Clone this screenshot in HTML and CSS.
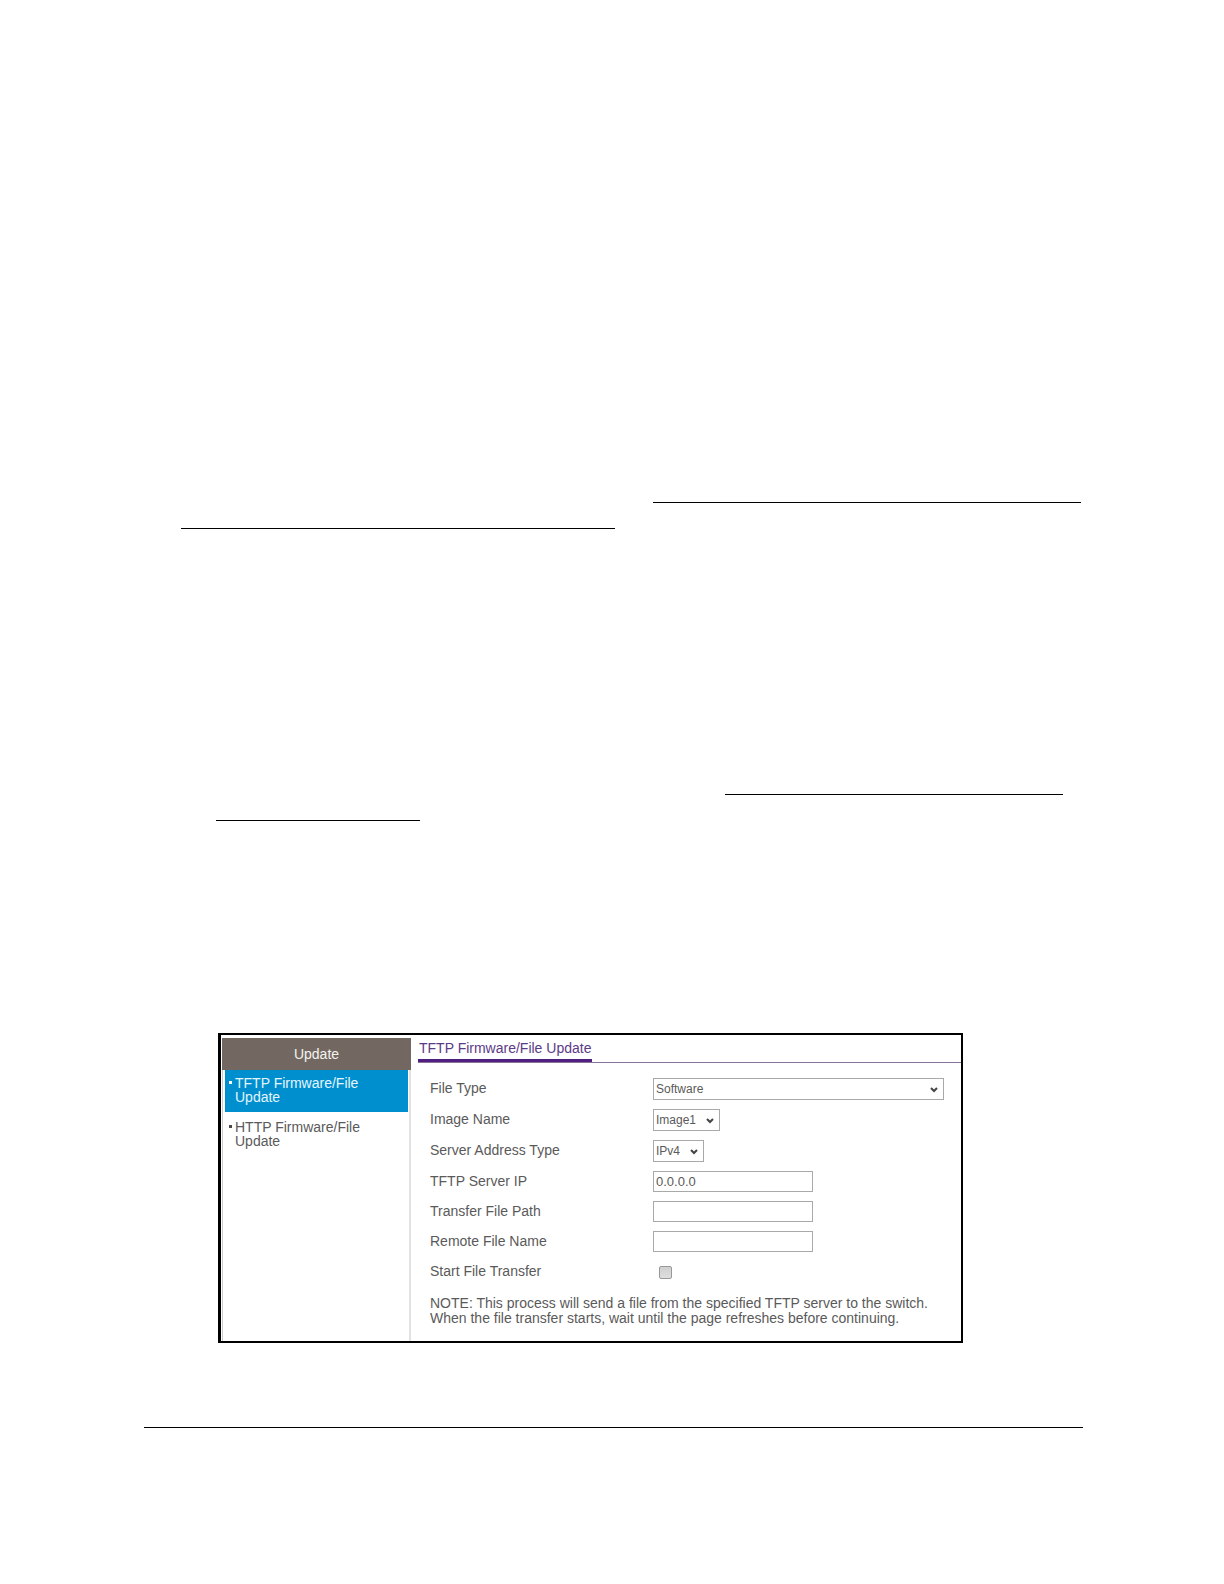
FILE: index.html
```html
<!DOCTYPE html>
<html lang="en">
<head>
<meta charset="utf-8">
<title>TFTP Firmware/File Update</title>
<link rel="stylesheet" href="styles.css">
</head>
<body>
<div class="page">
    <div class="lines">
        <div class="line line-a"></div>
        <div class="line line-b"></div>
    </div>
    <div class="lines lines-step">
        <div class="line line-c"></div>
        <div class="line line-d"></div>
    </div>

    <div class="panel">
        <div class="side">
            <h2>Update</h2>
            <ul>
                <li class="on"><a href="#">TFTP Firmware/File Update</a></li>
                <li><a href="#">HTTP Firmware/File Update</a></li>
            </ul>
        </div>
        <form class="main">
            <div class="title"><h1>TFTP Firmware/File Update</h1></div>
            <div class="fields">
                <label for="fileType">File Type</label>
                <div class="select wide">
                    <select id="fileType"><option>Software</option></select>
                    <svg width="8" height="6" viewBox="0 0 8 6"><path d="M1 1l3 3 3-3"/></svg>
                </div>
                <label for="imageName">Image Name</label>
                <div class="select image">
                    <select id="imageName"><option>Image1</option></select>
                    <svg width="8" height="6" viewBox="0 0 8 6"><path d="M1 1l3 3 3-3"/></svg>
                </div>
                <label for="addrType">Server Address Type</label>
                <div class="select addr">
                    <select id="addrType"><option>IPv4</option></select>
                    <svg width="8" height="6" viewBox="0 0 8 6"><path d="M1 1l3 3 3-3"/></svg>
                </div>
                <label for="serverIp">TFTP Server IP</label>
                <input type="text" id="serverIp" value="0.0.0.0">
                <label for="filePath">Transfer File Path</label>
                <input type="text" id="filePath">
                <label for="fileName">Remote File Name</label>
                <input type="text" id="fileName">
                <label for="start">Start File Transfer</label>
                <input type="checkbox" id="start">
            </div>
            <p class="note">NOTE: This process will send a file from the specified TFTP server to the switch.<br>When the file transfer starts, wait until the page refreshes before continuing.</p>
        </form>
    </div>

    <hr class="foot">
</div>
</body>
</html>
```

FILE: styles.css
```css
body,h1,h2,ul,li,p,form{margin:0;padding:0;}
*{box-sizing:border-box;}
body{background:#fff;color:#5a5a5a;font:14px/20px "Liberation Sans",Arial,sans-serif;}
ul{list-style-type:none;}
h1,h2{font-size:14px;font-weight:normal;}

.page{margin:0 141px 0 144px;padding:502px 0 60px;}

/* underlines */
.lines{display:flex;flex-direction:column;gap:25px;margin:0 2px 0 37px;}
.lines-step{margin:265px 20px 0 72px;}
.line{height:1px;background:#000;}
.line-a{width:428px;align-self:flex-end;}
.line-b{width:434px;}
.line-c{width:338px;align-self:flex-end;}
.line-d{width:204px;}

/* panel */
.panel{display:flex;margin:212px 120px 0 74px;border:2px solid #000;border-left-width:3px;}
.side{display:flex;flex-direction:column;flex:none;width:189px;margin:3px 0 0 1px;}
.side h2{height:32px;line-height:32px;background:#736861;color:#f4f2f0;text-align:center;}
.side ul{flex:1;padding:0 1px 0 2px;border-left:1px solid #ccc;border-right:2px solid #e2e2e2;}
.side li{position:relative;margin-bottom:2px;padding:6px 40px 8px 10px;line-height:14px;}
.side li:before{content:"";position:absolute;left:4px;top:11px;width:3px;height:3px;background:#4a4a4a;}
.side li.on{background:#008fce;}
.side li.on:before{background:#fff;}
.side a{color:#5a5a5a;text-decoration:none;}
.side .on a{color:#e4f5fd;}

.main{flex:1;margin-left:7px;padding-bottom:15px;}
.title{display:flex;height:28px;border-bottom:1px solid #8a7299;}
.title h1{height:27px;padding:3px 1px 0;line-height:20px;color:#5b3a86;border-bottom:3px solid #4f2080;}

.fields{display:grid;grid-template-columns:223px 1fr;gap:9px 0;align-items:start;margin:15px 17px 0 12px;}
.select{position:relative;height:22px;}
.select select{width:100%;height:22px;padding:0 2px;font-size:12px;}
.select svg{position:absolute;right:6px;top:9px;pointer-events:none;fill:none;stroke:#444;stroke-width:2;}
.wide{width:100%;}
.image{width:67px;}
.addr{width:51px;}
select,input{-webkit-appearance:none;appearance:none;margin:0;color:#5a5a5a;background:#fff;border:1px solid #a9a9a9;border-radius:0;font-family:inherit;}
input[type=text]{width:160px;height:21px;padding:0 2px;font-size:13px;}
input[type=checkbox]{width:13px;height:13px;margin:5px 0 3px 6px;border-color:#999;border-radius:2px;background:linear-gradient(#d0d0d0,#dedede);}
.note{margin:14px 0 0 12px;line-height:15px;}

.foot{height:1px;margin:84px 0 0;border:0;background:#000;}
```
